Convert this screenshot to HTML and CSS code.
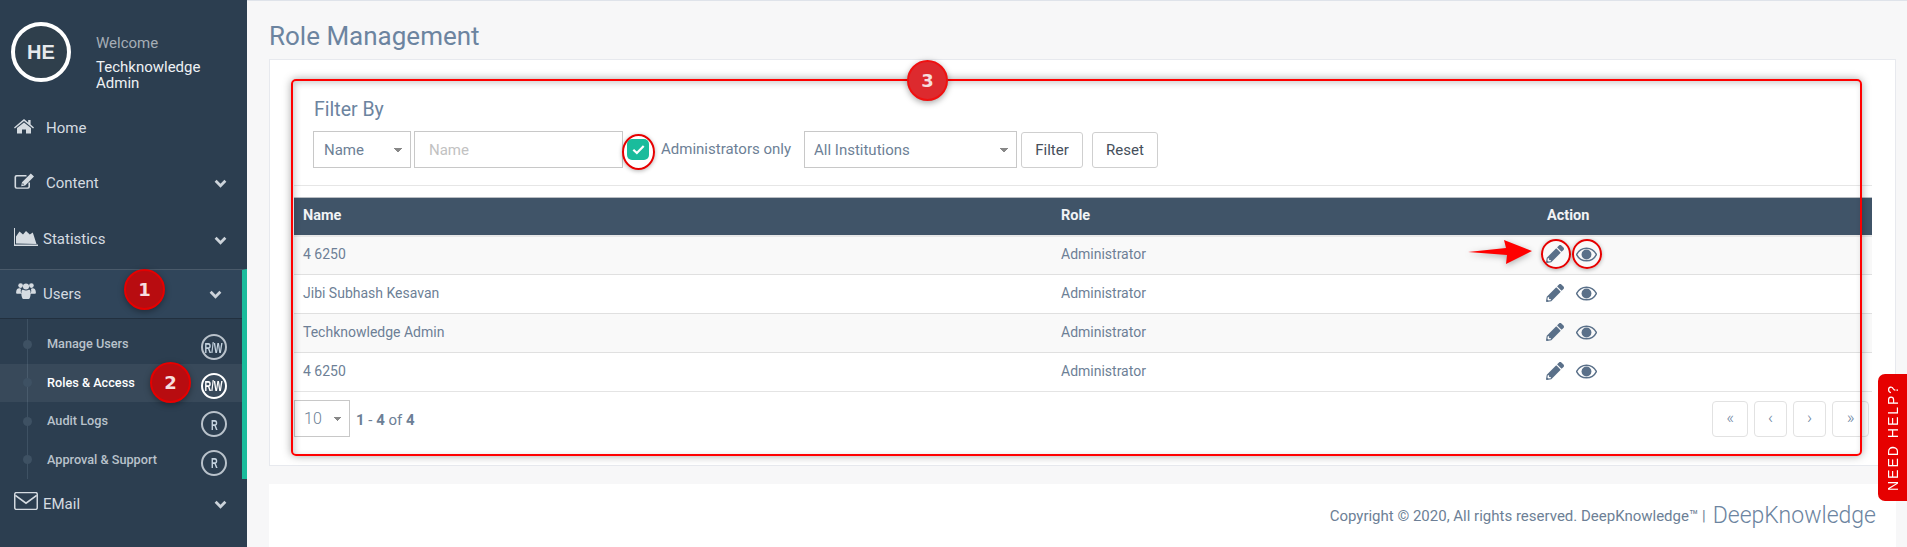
FILE: index.html
```html
<!DOCTYPE html>
<html lang="en">
<head>
<meta charset="utf-8">
<title>Role Management</title>
<link rel="stylesheet" href="styles.css">
</head>
<body>
<svg class="defs" width="0" height="0">
  <symbol id="pencil" viewBox="0 0 512 512"><path d="M497.9 142.1l-46.1 46.1c-4.7 4.7-12.3 4.7-17 0l-111-111c-4.7-4.7-4.7-12.3 0-17l46.1-46.1c18.7-18.7 49.1-18.7 67.9 0l60.1 60.1c18.8 18.7 18.8 49.1 0 67.9zM284.2 99.8L21.6 362.4.4 483.9c-2.9 16.4 11.4 30.6 27.8 27.8l121.5-21.3 262.6-262.6c4.7-4.7 4.7-12.3 0-17l-111-111c-4.8-4.7-12.4-4.7-17.1 0zM88 424h48v36.3l-64.5 11.3-31.1-31.1L51.7 376H88v48z"/></symbol>
  <symbol id="eye" viewBox="0 0 20 14"><path d="M10 1C5.8 1 2.4 3.4.6 7c1.8 3.6 5.2 6 9.4 6s7.6-2.4 9.4-6C17.6 3.4 14.2 1 10 1z" fill="none" stroke="currentColor" stroke-width="1.4"/><circle cx="10" cy="7" r="4.7"/></symbol>
  <symbol id="chevron" viewBox="0 0 12 8"><path d="M1.5 1.5 6 6l4.5-4.5" fill="none" stroke="currentColor" stroke-width="2.6"/></symbol>
</svg>
<div class="app">
  <aside class="sidebar">
    <div class="profile">
      <div class="avatar">HE</div>
      <div class="who">
        <div class="welcome">Welcome</div>
        <div class="uname">Techknowledge Admin</div>
      </div>
    </div>
    <nav class="menu">
      <a class="item h55 gap-home">
        <svg class="ic" viewBox="0 0 20 16"><path d="M10 1 0 9.4l.9 1L10 3l9.1 7.4.9-1L16.6 6.6V2h-2.4v2.6z"/><path d="M10 4.4 3 10v5.600h5v-4.200h4v4.200h5V10z"/></svg>
        <span>Home</span>
      </a>
      <a class="item h56 gap-home">
        <svg class="ic edit" viewBox="0 0 20 16"><path d="M2.500 2h10v1.600H3a.9.9 0 0 0-.9.9v9c0 .5.4.9.9.9h10.500c.5 0 .9-.4.9-.9V9.500h1.600v4.300a2 2 0 0 1-2 2H2.500a2 2 0 0 1-2-2v-9.800a2 2 0 0 1 2-2z"/><path d="M16.800.5 20 3.600 11.200 12.500l-4 .8.800-4zM8.700 10l-.3 1.700 1.700-.3z"/></svg>
        <span>Content</span>
        <svg class="chev"><use href="#chevron"/></svg>
      </a>
      <a class="item h58 gap-chart">
        <svg class="ic wide" viewBox="0 0 24 18"><path d="M0 0h1v16.500h23V18H0z"/><path d="M2 15.500V8.500l3.500-5 3.500 3 3-3.500 3.800 3.500 3-2 3.700 11.500z"/></svg>
        <span>Statistics</span>
        <svg class="chev"><use href="#chevron"/></svg>
      </a>
      <div class="group">
        <a class="item users gap-chart">
          <svg class="ic wide" viewBox="0 0 22 20"><circle cx="5" cy="4" r="2.600"/><circle cx="17" cy="4" r="2.600"/><circle cx="11" cy="5" r="3.400"/><path d="M0 12c0-3.500 1.500-5 3.500-5 1 0 1.500.4 2 .7C5 9 5 11 6 13H1c-.6 0-1-.4-1-1zM22 12c0-3.500-1.500-5-3.500-5-1 0-1.500.4-2 .7.500 1.300.500 3.300-.5 5.300h5c.6 0 1-.4 1-1zM6 10.500C6 9 7 8.300 7.800 8.600c2 1.200 4.400 1.200 6.400 0 .8-.3 1.800.4 1.800 1.900 0 2 .5 3.500-.5 6.500-.300 1.500-1 2-2.500 2H9c-1.500 0-2.200-.5-2.500-2-1-3-.5-4.500-.5-6.500z"/></svg>
          <span>Users</span>
          <svg class="chev"><use href="#chevron"/></svg>
        </a>
        <ul class="sub">
          <li class="sub-item"><i class="dot"></i><span class="sub-label">Manage Users</span><b class="perm"><span class="perm-t">R/W</span></b></li>
          <li class="sub-item on"><i class="dot"></i><span class="sub-label">Roles &amp; Access</span><b class="perm"><span class="perm-t">R/W</span></b></li>
          <li class="sub-item"><i class="dot"></i><span class="sub-label">Audit Logs</span><b class="perm"><span class="perm-t">R</span></b></li>
          <li class="sub-item"><i class="dot"></i><span class="sub-label">Approval &amp; Support</span><b class="perm"><span class="perm-t">R</span></b></li>
        </ul>
      </div>
      <a class="item h50 gap-chart">
        <svg class="ic wide" viewBox="0 0 21 16"><path d="M2 .5h17A1.500 1.500 0 0 1 20.500 2v12a1.500 1.500 0 0 1-1.500 1.500H2A1.500 1.500 0 0 1 .5 14V2A1.500 1.500 0 0 1 2 .5z" fill="none" stroke="currentColor" stroke-width="1.300"/><path d="M1 3l9.500 7L20 3" fill="none" stroke="currentColor" stroke-width="1.500"/></svg>
        <span>EMail</span>
        <svg class="chev"><use href="#chevron"/></svg>
      </a>
    </nav>
  </aside>

  <main class="main">
    <h1 class="title">Role Management</h1>
    <section class="card">
      <div class="filter">
        <h2 class="filter-title">Filter By</h2>
        <form class="filter-row">
          <select class="ctl by"><option>Name</option></select>
          <input class="ctl name" type="text" placeholder="Name">
          <span class="check"><svg viewBox="0 0 12 10" width="13" height="11"><path d="M1.200 5.200 4.500 8.300 10.800 1.700" fill="none" stroke="#fff" stroke-width="2"/></svg></span>
          <label class="admin">Administrators only</label>
          <select class="ctl inst"><option>All Institutions</option></select>
          <button class="btn filter-btn" type="button">Filter</button>
          <button class="btn reset-btn" type="button">Reset</button>
        </form>
      </div>
      <table class="grid">
        <thead>
          <tr><th class="c-name">Name</th><th class="c-role">Role</th><th class="c-act">Action</th></tr>
        </thead>
        <tbody>
          <tr><td>4 6250</td><td>Administrator</td><td class="acts"><svg class="pen"><use href="#pencil"/></svg><svg class="eye"><use href="#eye"/></svg></td></tr>
          <tr><td>Jibi Subhash Kesavan</td><td>Administrator</td><td class="acts"><svg class="pen"><use href="#pencil"/></svg><svg class="eye"><use href="#eye"/></svg></td></tr>
          <tr><td>Techknowledge Admin</td><td>Administrator</td><td class="acts"><svg class="pen"><use href="#pencil"/></svg><svg class="eye"><use href="#eye"/></svg></td></tr>
          <tr><td>4 6250</td><td>Administrator</td><td class="acts"><svg class="pen"><use href="#pencil"/></svg><svg class="eye"><use href="#eye"/></svg></td></tr>
        </tbody>
      </table>
      <div class="pager">
        <select class="ctl size"><option>10</option></select>
        <div class="range"><b>1</b> - <b>4</b> of <b>4</b></div>
        <div class="pages">
          <button class="pg w36" type="button">«</button>
          <button class="pg w33" type="button">‹</button>
          <button class="pg w33" type="button">›</button>
          <button class="pg w37" type="button">»</button>
        </div>
      </div>
    </section>
    <footer class="foot">
      <span class="copy">Copyright © 2020, All rights reserved. DeepKnowledge™ |</span>
      <span class="brand">DeepKnowledge</span>
    </footer>
  </main>
</div>

<div class="mark box3"></div>
<div class="mark ring r-check"></div>
<div class="mark ring r-pen"></div>
<div class="mark ring r-eye"></div>
<svg class="mark arrow" viewBox="0 0 64 24"><path d="M0 12 38 8 36 0 64 11 38 24 39 15z" fill="#f00"/></svg>
<div class="mark num n1">1</div>
<div class="mark num n2">2</div>
<div class="mark num n3">3</div>
<a class="help">NEED HELP?</a>
</body>
</html>
```
FILE: styles.css
```css
* { box-sizing: border-box; }
html, body { margin: 0; height: 100%; overflow: hidden; }
body { font-family: Roboto, "Liberation Sans", sans-serif; font-size: 14px; color: #6d7f96; position: relative; }
.defs { display: block; height: 0; }

.app { display: flex; height: 547px; }

/* sidebar */
.sidebar { width: 247px; flex: none; background: #2c3e50; color: #d5dbe1; }
.profile { display: flex; height: 100px; padding: 22px 0 0 11px; }
.avatar { width: 60px; height: 60px; border: 4px solid #fff; border-radius: 50%; background: #2f3f4c; color: #e6e9ec; font: bold 20px "Liberation Sans", sans-serif; display: flex; align-items: center; justify-content: center; flex: none; }
.who { margin-left: 25px; padding-top: 13px; width: 120px; font-size: 15px; line-height: 16px; }
.welcome { color: #a5adb6; margin-bottom: 8px; }
.uname { color: #eef1f4; }
.item { display: flex; align-items: center; padding: 0 20px 0 14px; font-size: 15px; }
.h55 { height: 55px; }
.h56 { height: 56px; }
.h58 { height: 58px; }
.h58 span { margin-top: -2px; }
.h50 { height: 50px; }
.ic { width: 20px; height: 16px; fill: currentColor; flex: none; color: #d5dbe1; margin-top: -3px; }
.ic.edit { margin-top: -4px; }
.ic.wide { width: 24px; height: 18px; margin-top: -6px; }
.gap-home span { margin-left: 12px; }
.gap-chart span { margin-left: 5px; }
.chev { width: 13px; height: 9px; margin-left: auto; color: #ccd3da; }
.group { border-top: 1px solid #4a5a6a; border-right: 5px solid #1abc9c; }
.users { height: 49px; background: #30455a; border-bottom: 1px solid #22303f; }
.sub { list-style: none; margin: 0; padding: 6px 0 0; background: linear-gradient(#3e5163, #3e5163) 27px 0 / 1px 100% no-repeat; }
.sub-item { display: flex; align-items: center; height: 38.5px; padding: 0 15px 0 23px; font-size: 12.7px; font-weight: 500; color: #b9c2cb; }
.sub-item.on { background: rgba(255,255,255,.06); color: #fff; }
.dot { width: 9px; height: 9px; border-radius: 50%; background: #3e5163; flex: none; }
.sub-label { margin-left: 15px; margin-top: -1px; }
.perm { margin-left: auto; margin-top: 6px; width: 26px; height: 26px; border-radius: 50%; border: 2px solid #b9c2cb; display: flex; align-items: center; justify-content: center; font: bold 15px/1 "Liberation Sans", sans-serif; color: #c5d3df; }
.perm-t { display: block; transform: scaleX(.62); white-space: nowrap; }
.sub-item.on .perm { border-color: #fff; color: #fff; }

/* main */
.main { flex: 1; min-width: 0; background: #f7f7f8; border-top: 1px solid #dfe3ea; padding: 0 11px 0 22px; }
.title { margin: 0; height: 58px; padding-top: 19px; font-size: 26px; line-height: 32px; font-weight: 400; color: #6c84a0; }
.card { height: 407px; background: #fff; border: 1px solid #e7e9ee; padding: 0 23px 0 24px; }
.filter { height: 126px; border-bottom: 1px solid #e6e6e6; padding: 40px 0 0 19px; }
.filter-title { margin: 0 0 11px 1px; font-size: 19.5px; line-height: 20px; font-weight: 400; color: #6c84a0; }
.filter-row { display: flex; align-items: center; }
.ctl { height: 37px; border: 1px solid #c8c8c8; border-radius: 0; background-color: #fff; font: 15px Roboto, sans-serif; color: #6d7f96; padding: 0 0 0 10px; outline: none; appearance: none; }
select.ctl { background-image: linear-gradient(45deg, transparent 50%, #888 50%), linear-gradient(-45deg, transparent 50%, #888 50%); background-size: 4px 4px, 4px 4px; background-repeat: no-repeat; }
.by { width: 98px; background-position: right 12px center, right 8px center; }
.name { width: 209px; margin-left: 3px; padding-left: 14px; }
.name::placeholder { color: #c2c2c2; }
.check { width: 22px; height: 21px; margin-left: 4px; border-radius: 5px; background: #1abc9c; display: flex; align-items: center; justify-content: center; flex: none; }
.admin { margin-left: 12px; font-size: 15px; color: #6d7f96; width: 143px; margin-top: -2px; }
.inst { width: 213px; padding-left: 9px; background-position: right 12px center, right 8px center; }
.btn { height: 36px; margin-left: 4px; background: #fff; border: 1px solid #cfcfcf; border-radius: 3px; font: 15px Roboto, sans-serif; color: #454f5b; padding: 0; }
.filter-btn { width: 62px; }
.reset-btn { width: 66px; margin-left: 9px; }
.grid { width: 100%; margin-top: 11px; border-collapse: collapse; table-layout: fixed; border-bottom: 1px solid #e4e4e4; }
.grid th { height: 38px; background: #405468; border-top: 1px solid #b9bdc2; border-bottom: 2px solid #e8e8e8; color: #f1f3f5; text-align: left; font-size: 14.5px; font-weight: 700; padding: 0 0 2px 9px; }
.grid td { height: 39px; border-bottom: 1px solid #e0e0e0; padding: 0 0 2px 9px; color: #6d7f96; }
.grid tbody tr:nth-child(odd) { background: #f9f9f9; }
.grid tr:last-child td { border-bottom: 0; }
.c-name { width: 758px; }
.c-role { width: 497px; }
.grid th.c-act { padding-left: 0; text-indent: -2px; }
.grid td.acts { padding-left: 0; }
.pen { width: 18px; height: 18px; fill: #5a7089; margin-left: -3px; vertical-align: middle; }
.eye { width: 21px; height: 15px; fill: #5a7089; color: #5a7089; margin-left: 12px; vertical-align: middle; }
.pager { display: flex; align-items: center; margin-top: 8px; }
.size { width: 56px; padding-left: 9px; font-weight: 300; font-size: 16px; background-position: right 12px center, right 8px center; }
.range { margin-left: 6px; font-size: 15px; color: #6d7f96; margin-top: 2px; }
.pages { margin-left: auto; display: flex; gap: 6px; margin-right: 3px; }
.pg { height: 36px; background: #fff; border: 1px solid #e2e2e2; border-radius: 4px; color: #6c84a0; font: 300 17px Roboto, sans-serif; padding: 0 0 3px; }
.w36 { width: 36px; }
.w37 { width: 37px; }
.w33 { width: 33px; }
.foot { height: 63px; margin-top: 18px; background: #fff; display: flex; justify-content: flex-end; align-items: center; padding-right: 20px; gap: 7px; color: #6d7f96; }
.copy { font-size: 15px; }
.brand { font-size: 23px; font-weight: 300; color: #6c84a0; }

/* annotations over the page */
.mark { position: absolute; pointer-events: none; }
.box3 { left: 291px; top: 79px; width: 1571px; height: 377px; border: 2px solid #f00; border-radius: 5px; box-shadow: 0 0 8px rgba(0,0,0,.35), inset 2px 2px 6px rgba(0,0,0,.2); }
.ring { border: 2px solid #e60000; border-radius: 50%; box-shadow: 0 1px 4px rgba(0,0,0,.3); }
.r-check { left: 622px; top: 134px; width: 33px; height: 36px; }
.r-pen { left: 1541px; top: 239px; width: 30px; height: 30px; }
.r-eye { left: 1572px; top: 239px; width: 30px; height: 30px; }
.arrow { left: 1467px; top: 240px; width: 66px; height: 24px; filter: drop-shadow(0 2px 3px rgba(0,0,0,.3)); }
.num { width: 41px; height: 41px; border-radius: 50%; display: flex; align-items: center; justify-content: center; color: #f6dede; font: bold 18px "DejaVu Sans", sans-serif; border: 2px solid #e60000; box-shadow: 0 2px 6px rgba(0,0,0,.35); }
.n1 { left: 124px; top: 269px; background: #b80c10; }
.n2 { left: 150px; top: 362px; background: #b80c10; }
.n3 { left: 907px; top: 60px; background: #dd2a2e; border-color: #f01010; }
.help { position: absolute; left: 1878px; top: 374px; width: 29px; height: 127px; background: #e60000; color: #fff; writing-mode: vertical-rl; transform: rotate(180deg); border-radius: 0 7px 7px 0; display: flex; align-items: center; justify-content: center; font: 14px "Liberation Sans", sans-serif; letter-spacing: 2px; }
```
